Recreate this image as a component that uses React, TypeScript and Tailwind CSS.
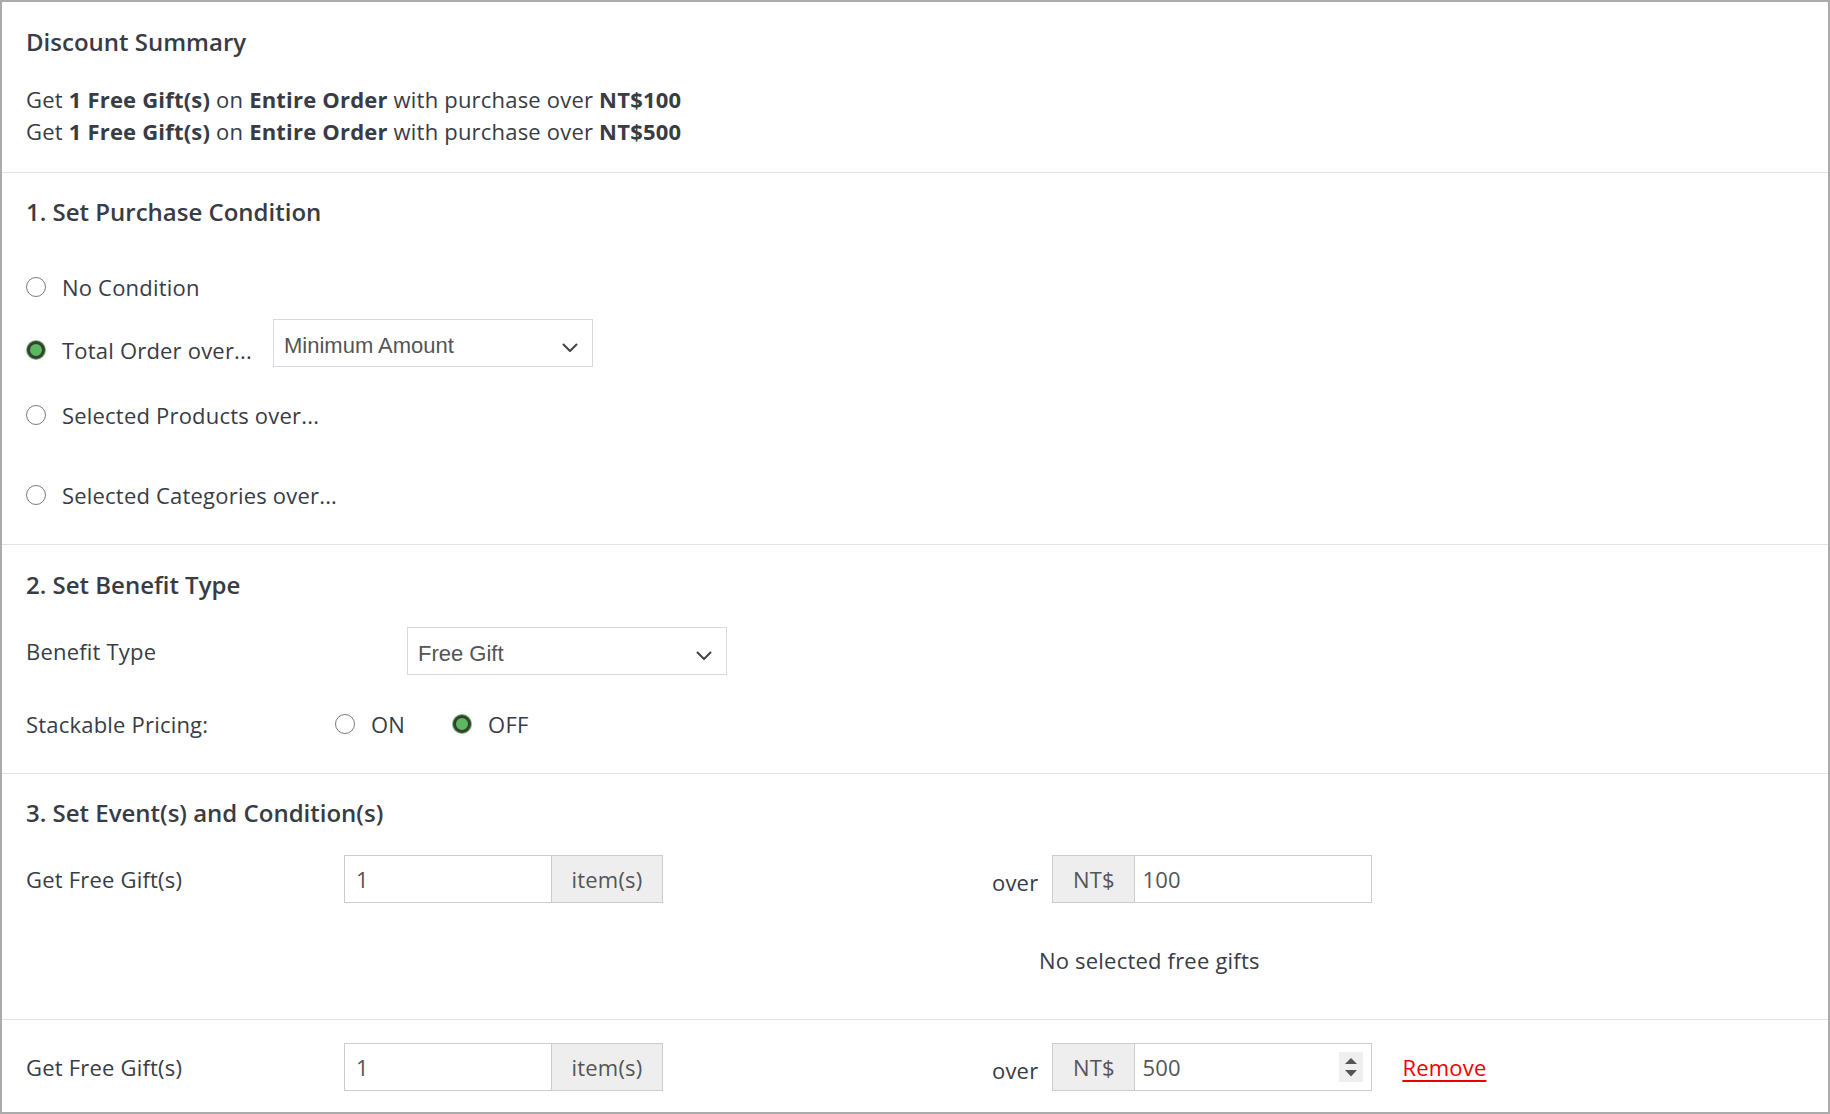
import React from "react";

function Radio({ checked }: { checked?: boolean }) {
  if (checked) {
    return (
      <span className="flex h-[20px] w-[20px] shrink-0 rounded-full bg-[#6cc464] p-[1px]">
        <span className="block h-full w-full rounded-full border-[3px] border-[#3b3b3b] bg-[#5cb85c]" />
      </span>
    );
  }
  return <span className="block h-[20px] w-[20px] shrink-0 rounded-full border-[1.5px] border-[#7a7a7a] bg-white" />;
}

function Chevron() {
  return (
    <span className="flex pt-[9px]">
      <svg width="16" height="10" viewBox="0 0 16 10" fill="none">
        <polyline points="1.5,1.5 8,8 14.5,1.5" stroke="#444" strokeWidth="2" strokeLinecap="round" strokeLinejoin="round" />
      </svg>
    </span>
  );
}

function Select({ value }: { value: string }) {
  return (
    <div className="flex h-[48px] w-[320px] shrink-0 items-center justify-between border border-[#d9d9d9] bg-white pl-[10px] pr-[14px] font-['Liberation_Sans',Arial,sans-serif] text-[22px] tracking-normal text-[#555]">
      <span className="pt-[5px]">{value}</span>
      <Chevron />
    </div>
  );
}

function Spinner() {
  return (
    <svg width="24" height="30" viewBox="0 0 24 30" className="shrink-0">
      <rect x="0" y="0" width="24" height="30" fill="#efefef" />
      <polygon points="6,12 18,12 12,6" fill="#555" />
      <polygon points="6,18 18,18 12,24.5" fill="#555" />
    </svg>
  );
}

function GiftRow({ amount, spinner, remove }: { amount: string; spinner?: boolean; remove?: boolean }) {
  return (
    <div className="flex items-center">
      <div className="w-[318px] shrink-0">Get Free Gift(s)</div>
      <div className="flex h-[48px] w-[319px] shrink-0 border border-[#cccccc]">
        <div className="flex flex-1 items-center bg-white pl-[11px] text-[#555]">1</div>
        <div className="flex w-[111px] items-center justify-center border-l border-[#cccccc] bg-[#eeeeee] text-[#555]">item(s)</div>
      </div>
      <div className="ml-[329px] shrink-0 pt-[6px]">over</div>
      <div className="ml-[14px] flex h-[48px] w-[320px] shrink-0 border border-[#cccccc]">
        <div className="flex w-[82px] items-center justify-center border-r border-[#cccccc] bg-[#eeeeee] text-[#555]">NT$</div>
        <div className="flex flex-1 items-center justify-between bg-white pl-[7px] pr-[8px] text-[#555]">
          <span>{amount}</span>
          {spinner ? <Spinner /> : null}
        </div>
      </div>
      {remove ? (
        <a href="#" className="ml-[30px] text-[#ee0000] underline decoration-[2px] underline-offset-[4px]">
          Remove
        </a>
      ) : null}
    </div>
  );
}

export default function App() {
  return (
    <div className="flex h-[1114px] w-[1830px] flex-col border-2 border-[#ababab] bg-white font-['Open_Sans',sans-serif] text-[22px] leading-[32px] tracking-[0.2px] text-[#383c44]">
      {/* Discount Summary */}
      <section className="border-b border-[#e3e3e3] px-[24px] pb-[25px] pt-[24px]">
        <h2 className="text-[24px] font-semibold tracking-normal">Discount Summary</h2>
        <div className="mt-[25px]">
          <p>
            Get <b className="font-bold">1 Free Gift(s)</b> on <b className="font-bold">Entire Order</b> with purchase over{" "}
            <b className="font-bold">NT$100</b>
          </p>
          <p>
            Get <b className="font-bold">1 Free Gift(s)</b> on <b className="font-bold">Entire Order</b> with purchase over{" "}
            <b className="font-bold">NT$500</b>
          </p>
        </div>
      </section>

      {/* 1. Set Purchase Condition */}
      <section className="border-b border-[#e3e3e3] px-[24px] pb-[33px] pt-[23px]">
        <h2 className="text-[24px] font-semibold tracking-normal">1. Set Purchase Condition</h2>
        <label className="mt-[43px] flex items-center gap-[16px]">
          <Radio />
          <span>No Condition</span>
        </label>
        <div className="mt-[16px] flex items-start">
          <label className="mt-[15px] flex w-[247px] shrink-0 items-center gap-[16px]">
            <Radio checked />
            <span>Total Order over...</span>
          </label>
          <Select value="Minimum Amount" />
        </div>
        <label className="mt-[32px] flex items-center gap-[16px]">
          <Radio />
          <span>Selected Products over...</span>
        </label>
        <label className="mt-[48px] flex items-center gap-[16px]">
          <Radio />
          <span>Selected Categories over...</span>
        </label>
      </section>

      {/* 2. Set Benefit Type */}
      <section className="border-b border-[#e3e3e3] px-[24px] pb-[33px] pt-[24px]">
        <h2 className="text-[24px] font-semibold tracking-normal">2. Set Benefit Type</h2>
        <div className="mt-[26px] flex items-center">
          <div className="w-[381px] shrink-0">Benefit Type</div>
          <Select value="Free Gift" />
        </div>
        <div className="mt-[33px] flex items-center">
          <div className="w-[309px] shrink-0">Stackable Pricing:</div>
          <label className="flex items-center gap-[16px]">
            <Radio />
            <span>ON</span>
          </label>
          <label className="ml-[47px] flex items-center gap-[16px]">
            <Radio checked />
            <span>OFF</span>
          </label>
        </div>
      </section>

      {/* 3. Set Event(s) and Condition(s) */}
      <section className="border-b border-[#e3e3e3] px-[24px] pb-[43px] pt-[23px]">
        <h2 className="text-[24px] font-semibold tracking-normal">3. Set Event(s) and Condition(s)</h2>
        <div className="mt-[26px]">
          <GiftRow amount="100" />
        </div>
        <p className="ml-[1013px] mt-[41px]">No selected free gifts</p>
      </section>

      <section className="flex-1 px-[24px] pt-[23px]">
        <GiftRow amount="500" spinner remove />
      </section>
    </div>
  );
}
